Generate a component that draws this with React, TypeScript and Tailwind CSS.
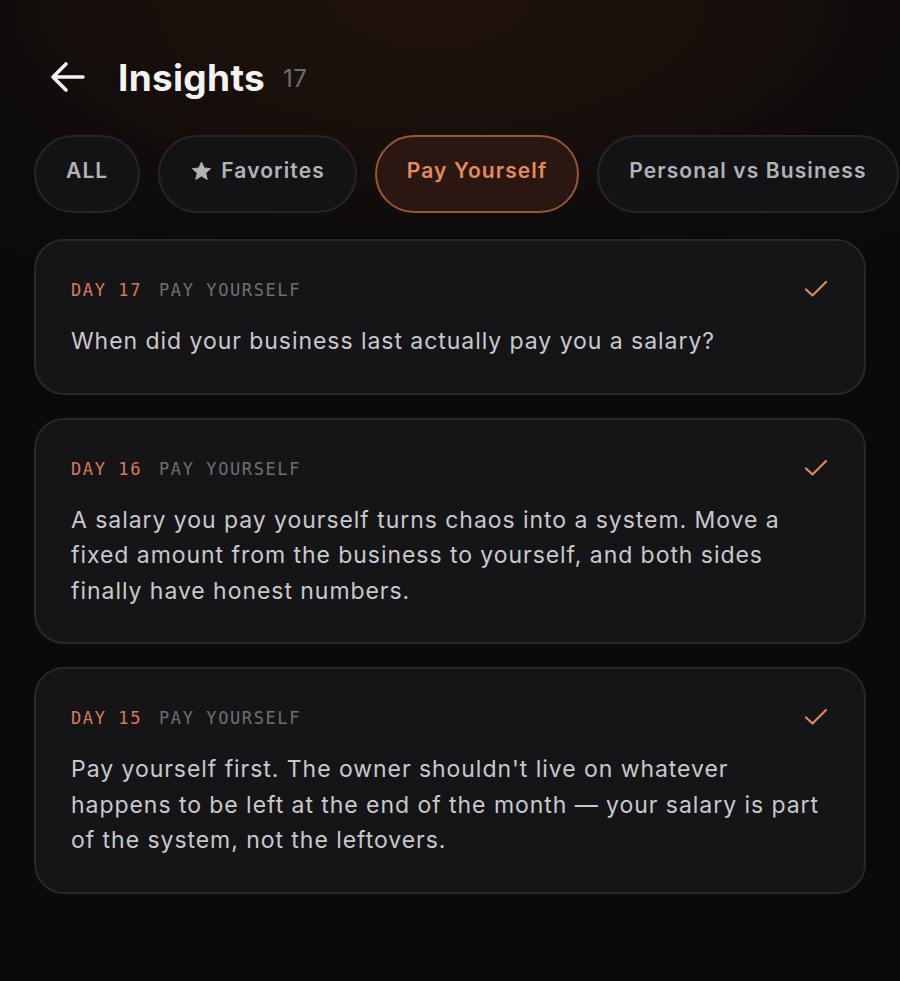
import React from "react";

const cards = [
  { day: 17, text: "When did your business last actually pay you a salary?" },
  {
    day: 16,
    text: "A salary you pay yourself turns chaos into a system. Move a fixed amount from the business to yourself, and both sides finally have honest numbers.",
  },
  {
    day: 15,
    text: "Pay yourself first. The owner shouldn't live on whatever happens to be left at the end of the month — your salary is part of the system, not the leftovers.",
  },
];

function Check() {
  return (
    <svg width="24" height="20" viewBox="0 0 24 20" fill="none">
      <path d="M2 10.5 L8.5 16.5 L22 3" stroke="#e2865c" strokeWidth="2.2" strokeLinecap="round" strokeLinejoin="round" />
    </svg>
  );
}

function StarIcon() {
  return (
    <svg width="21" height="20" viewBox="0 0 24 23" className="mr-[9px] mt-[1px]">
      <path
        d="M12 1.2 L15.1 8.1 L22.6 8.8 L16.9 13.8 L18.6 21.2 L12 17.3 L5.4 21.2 L7.1 13.8 L1.4 8.8 L8.9 8.1 Z"
        fill="#b3b3b6"
        stroke="#b3b3b6"
        strokeWidth="1"
        strokeLinejoin="round"
      />
    </svg>
  );
}

export default function App() {
  return (
    <div
      className="w-[900px] h-[981px] overflow-hidden bg-[#0a0a0d] relative"
      style={{ fontFamily: "Inter, 'Noto Sans', sans-serif" }}
    >
      <div className="absolute inset-0 bg-[radial-gradient(ellipse_700px_330px_at_430px_0px,#21130d_0%,#180f0b_40%,#0d0b0c_75%,#0a0a0d_100%)]" />
      <div className="relative">
        <div className="flex items-center pl-[50px] pt-[57px] h-[97px]">
          <svg width="36" height="32" viewBox="0 0 36 32" fill="none" className="mr-[32px]">
            <path d="M33 16 H3 M16 3 L3 16 L16 29" stroke="#f2f2f2" strokeWidth="3.6" strokeLinecap="round" strokeLinejoin="round" />
          </svg>
          <span className="text-[37px] font-bold text-[#f3f3f3] tracking-[0.3px] leading-none">Insights</span>
          <span className="ml-[18px] text-[24px] text-[#6e6e72] leading-none mt-[3px] tracking-[0.5px]">17</span>
        </div>
        <div className="flex gap-[18px] pl-[34px] mt-[38px] whitespace-nowrap">
          <div className="h-[78px] px-[30px] pb-[7px] rounded-full border-2 border-[#26262a] bg-[#131316] flex items-center text-[21px] font-semibold tracking-[1.1px] text-[#b3b3b6]">
            ALL
          </div>
          <div className="h-[78px] pl-[31px] pr-[30px] pb-[7px] rounded-full border-2 border-[#26262a] bg-[#131316] flex items-center text-[21px] font-semibold tracking-[1.1px] text-[#b3b3b6]">
            <StarIcon />
            Favorites
          </div>
          <div className="h-[78px] px-[30px] pb-[7px] rounded-full border-2 border-[#9a5535] bg-[#2a1711] flex items-center text-[21px] font-semibold tracking-[1.1px] text-[#e58a5e]">
            Pay Yourself
          </div>
          <div className="h-[78px] px-[30px] pb-[7px] rounded-full border-2 border-[#26262a] bg-[#131316] flex items-center text-[21px] font-semibold tracking-[1.1px] text-[#b3b3b6] shrink-0">
            Personal vs Business
          </div>
        </div>
        <div className="flex flex-col gap-[23px] mx-[34px] mt-[26px]">
          {cards.map((c) => (
            <div
              key={c.day}
              className="rounded-[30px] border-2 border-[#28282c] bg-[#151518] pl-[35px] pr-[36px] pt-[41px] pb-[33px]"
            >
              <div className="flex items-start justify-between">
                <div
                  className="text-[17px] tracking-[1.6px] leading-none"
                  style={{ fontFamily: "'DejaVu Sans Mono', 'Liberation Mono', monospace" }}
                >
                  <span className="text-[#d8795a]">DAY {c.day}</span>
                  <span className="text-[#6f6f73] ml-[17px]">PAY YOURSELF</span>
                </div>
                <div className="-mt-[3px]">
                  <Check />
                </div>
              </div>
              <p className="mt-[25px] text-[23px] leading-[35.5px] tracking-[0.95px] text-[#c9c9cc] w-[754px]">
                {c.text}
              </p>
            </div>
          ))}
        </div>
      </div>
    </div>
  );
}
